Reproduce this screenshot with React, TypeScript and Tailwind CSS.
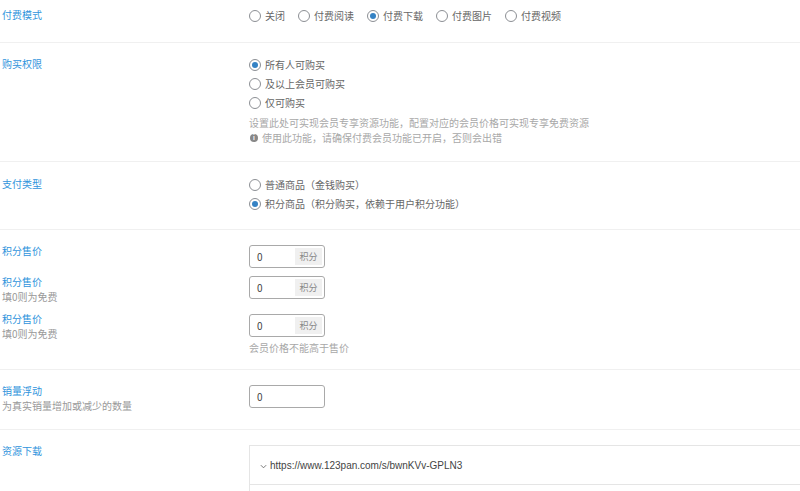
import * as React from "react"

const font = { fontFamily: '"Noto Sans CJK SC", "Noto Sans", sans-serif' }

function Radio({ label, checked }: { label: string; checked?: boolean }) {
  return (
    <label className="flex items-center gap-[4px] h-[19px] text-[10px] text-[#666] leading-none">
      <span className="w-[12px] h-[12px] rounded-full border border-[#8c8f94] bg-white flex items-center justify-center shrink-0">
        {checked && <span className="w-[6px] h-[6px] rounded-full bg-[#3582c4]" />}
      </span>
      <span>{label}</span>
    </label>
  )
}

function Label({ title, sub }: { title: string; sub?: string }) {
  return (
    <div className="w-[249px] shrink-0 pl-[2px]">
      <div className="text-[10px] leading-[14px] text-[#3094dc]">{title}</div>
      {sub && <div className="text-[10px] leading-[15px] text-[#999]">{sub}</div>}
    </div>
  )
}

function PointsInput({ suffix = true }: { suffix?: boolean }) {
  return (
    <div className="w-[76px] h-[23px] border border-[#a9a9a9] rounded-[3px] bg-white flex items-center p-[2px]">
      <span className="flex-1 pl-[5px] text-[10px] text-[#444]">0</span>
      {suffix && (
        <span className="h-full w-[27px] bg-[#f0f0f0] flex items-center justify-center text-[9px] text-[#888]">
          积分
        </span>
      )}
    </div>
  )
}

function Row({ children, className }: { children: React.ReactNode; className: string }) {
  return <div className={`flex border-b border-[#f0f0f0] ${className}`}>{children}</div>
}

export default function App() {
  return (
    <div className="w-[800px] h-[491px] overflow-hidden bg-white" style={font}>
      <Row className="h-[43px] pt-[8px]">
        <Label title="付费模式" />
        <div className="flex items-start gap-[13px] -mt-[2px]">
          <Radio label="关闭" />
          <Radio label="付费阅读" />
          <Radio label="付费下载" checked />
          <Radio label="付费图片" />
          <Radio label="付费视频" />
        </div>
      </Row>

      <Row className="h-[119px] pt-[14px]">
        <Label title="购买权限" />
        <div className="-mt-[2px]">
          <Radio label="所有人可购买" checked />
          <Radio label="及以上会员可购买" />
          <Radio label="仅可购买" />
          <div className="mt-[3px] text-[10px] leading-[15px] text-[#a8a8a8]">
            <div>设置此处可实现会员专享资源功能，配置对应的会员价格可实现专享免费资源</div>
            <div className="flex items-center gap-[4px]">
              <span className="w-[8px] h-[8px] rounded-full bg-[#888] text-white text-[6px] font-bold leading-none flex items-center justify-center ml-[1px]">
                i
              </span>
              <span>使用此功能，请确保付费会员功能已开启，否则会出错</span>
            </div>
          </div>
        </div>
      </Row>

      <Row className="h-[68px] pt-[15px]">
        <Label title="支付类型" />
        <div className="-mt-[2px]">
          <Radio label="普通商品（金钱购买）" />
          <Radio label="积分商品（积分购买，依赖于用户积分功能）" checked />
        </div>
      </Row>

      <div className="border-b border-[#f0f0f0] h-[140px] pt-[14px]">
        <div className="flex items-start">
          <Label title="积分售价" />
          <div className="mt-[1px]">
            <PointsInput />
          </div>
        </div>
        <div className="flex items-start mt-[7px]">
          <Label title="积分售价" sub="填0则为免费" />
          <div className="mt-[1px]">
            <PointsInput />
          </div>
        </div>
        <div className="flex items-start mt-[8px]">
          <Label title="积分售价" sub="填0则为免费" />
          <div className="mt-[2px]">
            <PointsInput />
            <div className="mt-[3px] text-[10px] leading-[15px] text-[#a8a8a8]">会员价格不能高于售价</div>
          </div>
        </div>
      </div>

      <Row className="h-[60px] pt-[14px]">
        <Label title="销量浮动" sub="为真实销量增加或减少的数量" />
        <div className="mt-[1px]">
          <PointsInput suffix={false} />
        </div>
      </Row>

      <div className="flex pt-[14px]">
        <Label title="资源下载" />
        <div className="flex-1 mt-[1px] border border-[#e5e5e5] border-r-0 h-[60px]">
          <div
            className="h-[39px] border-b border-[#e5e5e5] flex items-center pl-[10px] gap-[3px] text-[10px] text-[#444]"
            style={{ fontFamily: '"Liberation Sans", Arial, sans-serif' }}
          >
            <svg width="7" height="7" viewBox="0 0 8 8" className="mt-[2px]">
              <path d="M1 2.5 L4 5.5 L7 2.5" stroke="#666" strokeWidth="1" fill="none" />
            </svg>
            <span>https://www.123pan.com/s/bwnKVv-GPLN3</span>
          </div>
        </div>
      </div>
    </div>
  )
}
